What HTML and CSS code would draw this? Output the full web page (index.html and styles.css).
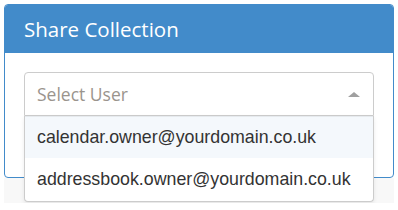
FILE: index.html
```html
<!DOCTYPE html>
<html lang="en">
  <head>
    <meta charset="UTF-8" />
    <title>Share Collection</title>
    <link rel="stylesheet" href="styles.css">
  </head>
  <body>
    <!-- Share panel -->
    <div class="panel">
      <div class="panel-heading">
        <h3 class="panel-title">Share Collection</h3>
      </div>
      <div class="panel-body">
        <div class="select-wrap">
          <div class="select-box">
            <span class="placeholder">Select User</span>
            <span class="arrow"></span>
          </div>
          <ul class="dropdown">
            <li class="option highlighted">calendar.owner@yourdomain.co.uk</li>
            <li class="option">addressbook.owner@yourdomain.co.uk</li>
          </ul>
        </div>
      </div>
    </div>
    <div class="panel-footer"></div>
  </body>
</html>
```

FILE: styles.css
```css
* {
  margin: 0;
  padding: 0;
  box-sizing: border-box;
}

body {
  margin: 4px;
  background-color: #fff;
  font-family: "Open Sans", "Liberation Sans", sans-serif;
}

/* Panel */
.panel {
  width: 390px;
  border: 1px solid #428bca;
  border-radius: 4px;
}

.panel-heading {
  height: 48px;
  display: flex;
  align-items: center;
  padding-left: 19px;
  background-color: #428bca;
  border-radius: 3px 3px 0 0;
}

.panel-title {
  color: #fff;
  font-size: 20.5px;
  font-weight: 500;
}

.panel-body {
  height: 124px;
  padding: 19px 19px 0;
}

.panel-footer {
  width: 390px;
  height: 25px;
  background-color: #f8f8f8;
}

/* Select */
.select-wrap {
  position: relative;
}

.select-box {
  height: 44px;
  display: flex;
  align-items: center;
  justify-content: space-between;
  padding: 0 12px;
  border: 1px solid #ccc;
  border-radius: 4px 4px 0 0;
  background-color: #fff;
}

.placeholder {
  color: #9a948d;
  font-size: 17.5px;
}

.arrow {
  width: 0;
  height: 0;
  border-left: 6px solid transparent;
  border-right: 6px solid transparent;
  border-bottom: 5px solid #a0a0a0;
  margin-right: 1px;
}

.dropdown {
  position: absolute;
  top: 44px;
  left: 0;
  right: 0;
  list-style: none;
  background-color: #fff;
  border: 1px solid #ccc;
  border-top: none;
  border-radius: 0 0 4px 4px;
  box-shadow: 0 2px 4px rgba(0, 0, 0, 0.08);
}

.option {
  height: 42px;
  display: flex;
  align-items: center;
  padding-left: 12px;
  font-family: "Liberation Sans", Arial, sans-serif;
  font-size: 17.8px;
  color: #333;
}

.option.highlighted {
  background-color: #f4f8fc;
  border-top: 1px solid #e6eaee;
}

.option + .option {
  height: 43px;
}
```
